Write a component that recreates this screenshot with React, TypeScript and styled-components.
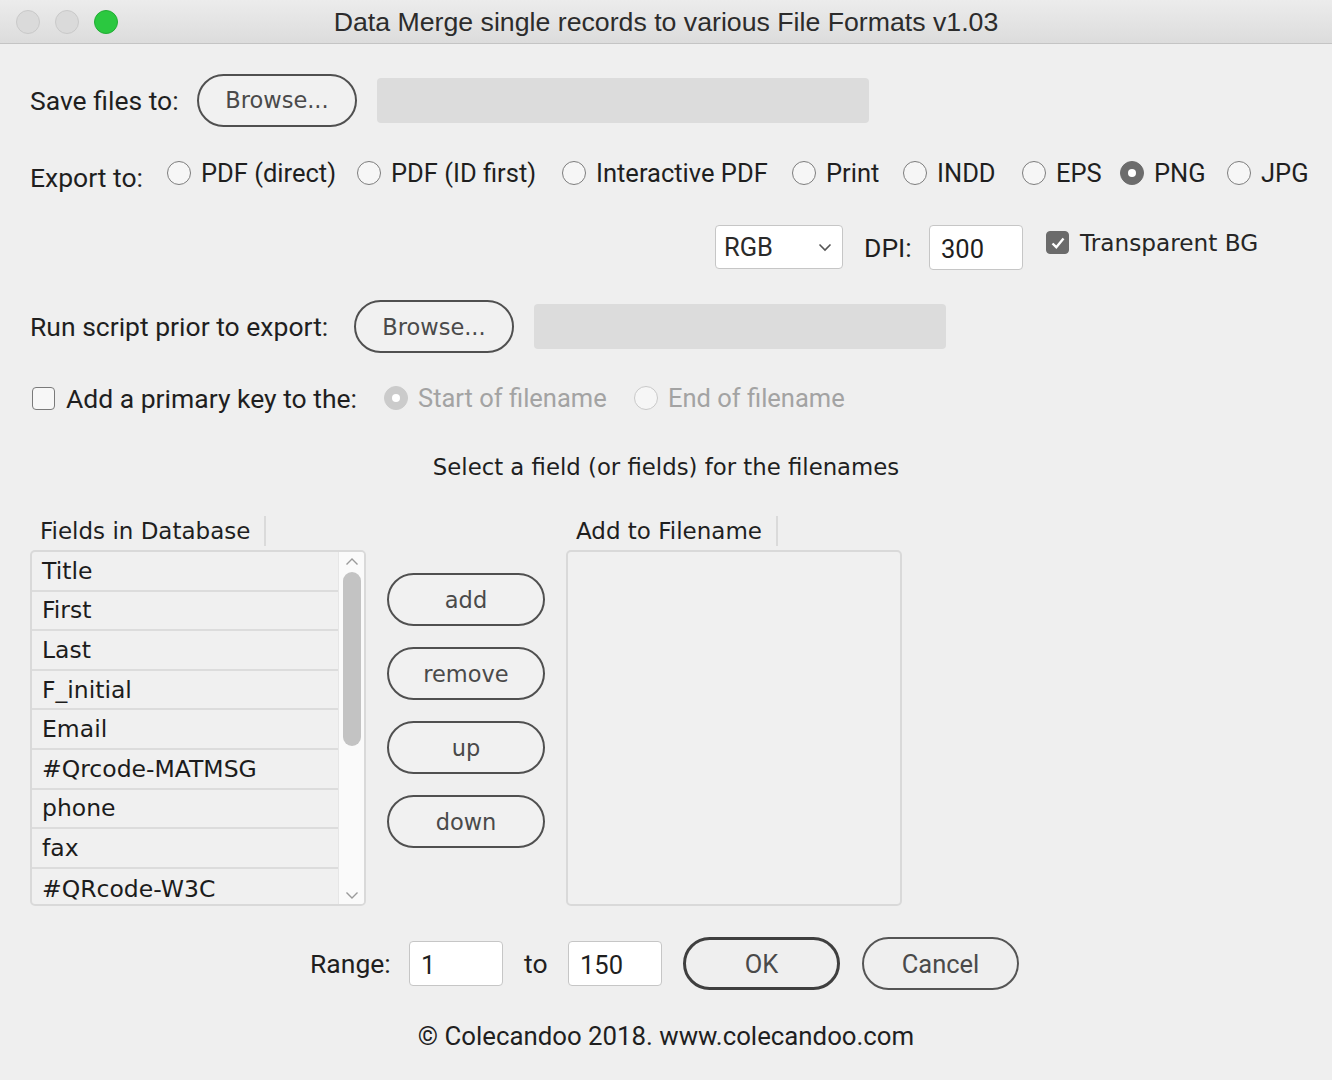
import React from "react";
import styled, { createGlobalStyle } from "styled-components";

const LUCIDA = `"DejaVu Sans", "Open Sans", sans-serif`;
const MYRIAD = `Roboto, "Liberation Sans", sans-serif`;

const GlobalStyle = createGlobalStyle`
  html, body {
    margin: 0;
    padding: 0;
    background: #efefef;
  }
  body {
    font-family: ${LUCIDA};
    color: #1f1f1f;
  }
`;

const exportFormats = [
  { label: "PDF (direct)", w: 190 },
  { label: "PDF (ID first)", w: 205 },
  { label: "Interactive PDF", w: 230 },
  { label: "Print", w: 111 },
  { label: "INDD", w: 119 },
  { label: "EPS", w: 98 },
  { label: "PNG", w: 107, checked: true },
  { label: "JPG", w: 80 },
];

const fields = [
  "Title",
  "First",
  "Last",
  "F_initial",
  "Email",
  "#Qrcode-MATMSG",
  "phone",
  "fax",
  "#QRcode-W3C",
];

const Chevron = ({ up }: { up?: boolean }) => (
  <svg width="14" height="9" viewBox="0 0 14 9">
    <path
      d={up ? "M1.5 7.5 L7 2 L12.5 7.5" : "M1.5 1.5 L7 7 L12.5 1.5"}
      fill="none"
      stroke="#9a9a9a"
      strokeWidth="1.4"
    />
  </svg>
);

const App: React.FC = () => {
  return (
    <Window>
      <GlobalStyle />
      <TitleBar>
        <Lights>
          <Light />
          <Light />
          <Light $green />
        </Lights>
        <Title>Data Merge single records to various File Formats v1.03</Title>
        <span />
      </TitleBar>

      <Body>
        <Row $mt={30} $h={52}>
          <Label $w={167}>Save files to:</Label>
          <PillButton $w={160}>Browse...</PillButton>
          <PathField $ml={20} $w={492} />
        </Row>

        <Row $mt={32} $h={30}>
          <Label $w={137} $shift={4}>
            Export to:
          </Label>
          {exportFormats.map((f) => (
            <Option key={f.label} $w={f.w}>
              <Radio $checked={f.checked} />
              <OptionText>{f.label}</OptionText>
            </Option>
          ))}
        </Row>

        <Row $mt={37} $h={44} $indent={685}>
          <Select>
            <span>RGB</span>
            <svg width="14" height="9" viewBox="0 0 14 9">
              <path d="M1.5 1.5 L7 7 L12.5 1.5" fill="none" stroke="#555" strokeWidth="1.6" />
            </svg>
          </Select>
          <Label $w={65} $ml={21}>
            DPI:
          </Label>
          <TextBox $w={94}>300</TextBox>
          <CheckBox $checked $ml={23}>
            <svg width="16" height="14" viewBox="0 0 16 14">
              <path d="M2.5 7.5 L6.3 11.2 L13.5 2.5" fill="none" stroke="#fff" strokeWidth="2.4" />
            </svg>
          </CheckBox>
          <CheckText>Transparent BG</CheckText>
        </Row>

        <Row $mt={31} $h={53}>
          <Label $w={324}>Run script prior to export:</Label>
          <PillButton $w={160}>Browse...</PillButton>
          <PathField $ml={20} $w={412} />
        </Row>

        <Row $mt={32} $h={26}>
          <CheckBox $ml={2} />
          <Label $w={318} $ml={11}>
            Add a primary key to the:
          </Label>
          <Option $w={250}>
            <Radio $checked $disabled />
            <OptionText $disabled>Start of filename</OptionText>
          </Option>
          <Option $w={220}>
            <Radio $disabled />
            <OptionText $disabled>End of filename</OptionText>
          </Option>
        </Row>

        <Heading>Select a field (or fields) for the filenames</Heading>

        <Columns>
          <Column>
            <ColumnHeader>
              <span>Fields in Database</span>
            </ColumnHeader>
            <ListBox>
              <ListRows>
                {fields.map((f) => (
                  <ListRow key={f}>{f}</ListRow>
                ))}
              </ListRows>
              <ScrollTrack>
                <Chevron up />
                <ScrollThumb />
                <Chevron />
              </ScrollTrack>
            </ListBox>
          </Column>

          <ButtonStack>
            <PillButton $w={158}>add</PillButton>
            <PillButton $w={158}>remove</PillButton>
            <PillButton $w={158}>up</PillButton>
            <PillButton $w={158}>down</PillButton>
          </ButtonStack>

          <Column>
            <ColumnHeader>
              <span>Add to Filename</span>
            </ColumnHeader>
            <ListBox />
          </Column>
        </Columns>

        <Row $mt={31} $h={53} $center>
          <Label $w={99}>Range:</Label>
          <TextBox $w={94}>1</TextBox>
          <Label $w={44} $ml={21}>
            to
          </Label>
          <TextBox $w={94}>150</TextBox>
          <DialogButton $ml={21} $default>
            OK
          </DialogButton>
          <DialogButton $ml={22}>Cancel</DialogButton>
        </Row>

        <Footer>© Colecandoo 2018. www.colecandoo.com</Footer>
      </Body>
    </Window>
  );
};

export default App;

const Window = styled.div`
  width: 1332px;
  height: 1080px;
  overflow: hidden;
  background: #efefef;
  display: flex;
  flex-direction: column;
`;

const TitleBar = styled.div`
  height: 43px;
  flex-shrink: 0;
  display: grid;
  grid-template-columns: 1fr auto 1fr;
  align-items: center;
  background: linear-gradient(to bottom, #ececec, #dcdcdc);
  border-bottom: 1px solid #c4c4c4;
`;

const Lights = styled.div`
  display: flex;
  gap: 15px;
  padding-left: 16px;
`;

const Light = styled.span<{ $green?: boolean }>`
  width: 24px;
  height: 24px;
  border-radius: 50%;
  box-sizing: border-box;
  background: ${({ $green }) => ($green ? "#2bc840" : "#dadada")};
  border: 1px solid ${({ $green }) => ($green ? "#22ad35" : "#c9c9c9")};
`;

const Title = styled.div`
  font-family: "Liberation Sans", Arial, sans-serif;
  font-size: 26.7px;
  color: #2c2c2c;
  padding-top: 1px;
`;

const Body = styled.div`
  padding: 0 30px;
  display: flex;
  flex-direction: column;
`;

const Row = styled.div<{ $mt: number; $h: number; $indent?: number; $center?: boolean }>`
  display: flex;
  align-items: center;
  justify-content: ${({ $center }) => ($center ? "center" : "flex-start")};
  margin-top: ${({ $mt }) => $mt}px;
  height: ${({ $h }) => $h}px;
  padding-left: ${({ $indent }) => $indent || 0}px;
  padding-right: ${({ $center }) => ($center ? "3px" : "0")};
`;

const Label = styled.span<{ $w?: number; $ml?: number; $shift?: number }>`
  font-family: ${MYRIAD};
  font-size: 26.5px;
  color: #1f1f1f;
  white-space: nowrap;
  flex-shrink: 0;
  width: ${({ $w }) => ($w ? `${$w}px` : "auto")};
  margin-left: ${({ $ml }) => $ml || 0}px;
  position: relative;
  top: ${({ $shift }) => $shift || 0}px;
`;

const PillButton = styled.div<{ $w: number }>`
  box-sizing: border-box;
  width: ${({ $w }) => $w}px;
  height: 53px;
  flex-shrink: 0;
  border: 2px solid #505050;
  border-radius: 27px;
  background: #f1f1f1;
  display: flex;
  align-items: center;
  justify-content: center;
  font-family: ${LUCIDA};
  font-size: 22.5px;
  color: #4a4a4a;
`;

const PathField = styled.div<{ $ml: number; $w: number }>`
  margin-left: ${({ $ml }) => $ml}px;
  width: ${({ $w }) => $w}px;
  height: 45px;
  border-radius: 4px;
  background: #dcdcdc;
`;

const Option = styled.label<{ $w: number }>`
  display: flex;
  align-items: center;
  gap: 10px;
  width: ${({ $w }) => $w}px;
  flex-shrink: 0;
  white-space: nowrap;
`;

const Radio = styled.span<{ $checked?: boolean; $disabled?: boolean }>`
  box-sizing: border-box;
  width: 24px;
  height: 24px;
  border-radius: 50%;
  flex-shrink: 0;
  position: relative;
  background: ${({ $checked, $disabled }) =>
    $checked ? ($disabled ? "#cbcbcb" : "#6c6c6c") : "#f6f6f6"};
  border: 1.5px solid
    ${({ $checked, $disabled }) =>
      $checked ? ($disabled ? "#cbcbcb" : "#6c6c6c") : $disabled ? "#c9c9c9" : "#7d7d7d"};

  &::after {
    content: "";
    display: ${({ $checked }) => ($checked ? "block" : "none")};
    position: absolute;
    left: 50%;
    top: 50%;
    width: 8px;
    height: 8px;
    margin: -4px 0 0 -4px;
    border-radius: 50%;
    background: #fff;
  }
`;

const OptionText = styled.span<{ $disabled?: boolean }>`
  font-family: ${MYRIAD};
  font-size: 25.5px;
  color: ${({ $disabled }) => ($disabled ? "#a3a3a3" : "#1f1f1f")};
`;

const Select = styled.div`
  box-sizing: border-box;
  width: 128px;
  height: 44px;
  flex-shrink: 0;
  background: #fff;
  border: 1.5px solid #c6c6c6;
  border-radius: 4px;
  display: flex;
  align-items: center;
  justify-content: space-between;
  padding: 0 10px 0 8px;
  font-family: ${MYRIAD};
  font-size: 25.5px;
  color: #2a2a2a;
`;

const TextBox = styled.div<{ $w: number }>`
  box-sizing: border-box;
  width: ${({ $w }) => $w}px;
  height: 45px;
  flex-shrink: 0;
  background: #fff;
  border: 1.5px solid #c6c6c6;
  border-radius: 4px;
  display: flex;
  align-items: center;
  padding: 3px 0 0 11px;
  font-family: ${MYRIAD};
  font-size: 25.5px;
  color: #1f1f1f;
`;

const CheckBox = styled.span<{ $checked?: boolean; $ml?: number }>`
  box-sizing: border-box;
  width: 23px;
  height: 23px;
  flex-shrink: 0;
  margin-left: ${({ $ml }) => $ml || 0}px;
  border-radius: 4px;
  display: flex;
  align-items: center;
  justify-content: center;
  align-self: ${({ $checked }) => ($checked ? "flex-start" : "center")};
  margin-top: ${({ $checked }) => ($checked ? "6px" : "0")};
  background: ${({ $checked }) => ($checked ? "#6b6b6b" : "#f7f7f7")};
  border: 1.5px solid ${({ $checked }) => ($checked ? "#6b6b6b" : "#7a7a7a")};
`;

const CheckText = styled.span`
  font-family: ${LUCIDA};
  font-size: 23.2px;
  color: #262626;
  margin-left: 11px;
  align-self: flex-start;
  margin-top: 4px;
  white-space: nowrap;
`;

const Heading = styled.div`
  margin-top: 41px;
  height: 30px;
  line-height: 30px;
  text-align: center;
  font-family: ${LUCIDA};
  font-size: 22.8px;
  color: #1f1f1f;
`;

const Columns = styled.div`
  display: flex;
  align-items: flex-start;
  gap: 21px;
  margin-top: 34px;
`;

const Column = styled.div`
  width: 336px;
  display: flex;
  flex-direction: column;
  gap: 4px;
`;

const ColumnHeader = styled.div`
  height: 30px;
  display: flex;
  align-items: center;
  padding-left: 10px;

  span {
    font-family: ${LUCIDA};
    font-size: 23px;
    color: #1f1f1f;
    padding-right: 14px;
    border-right: 2px solid #dadada;
    line-height: 30px;
  }
`;

const ListBox = styled.div`
  box-sizing: border-box;
  height: 356px;
  border: 2px solid #d9d9d9;
  border-radius: 5px;
  background: #f0f0f0;
  display: flex;
  overflow: hidden;
`;

const ListRows = styled.div`
  flex: 1;
  display: flex;
  flex-direction: column;
`;

const ListRow = styled.div`
  box-sizing: border-box;
  height: 39.6px;
  flex-shrink: 0;
  display: flex;
  align-items: center;
  padding-left: 10px;
  border-bottom: 2px solid #dcdcdc;
  font-family: ${LUCIDA};
  font-size: 23.5px;
  color: #1c1c1c;

  &:last-child {
    border-bottom: none;
  }
`;

const ScrollTrack = styled.div`
  width: 25px;
  flex-shrink: 0;
  background: #fafafa;
  border-left: 1px solid #e6e6e6;
  display: flex;
  flex-direction: column;
  align-items: center;
  padding: 5px 0 4px;
  gap: 6px;
`;

const ScrollThumb = styled.div`
  width: 18px;
  height: 174px;
  border-radius: 9px;
  background: #c3c3c3;
  margin-bottom: auto;
`;

const ButtonStack = styled.div`
  display: flex;
  flex-direction: column;
  gap: 21px;
  padding-top: 57px;
`;

const DialogButton = styled.div<{ $ml: number; $default?: boolean }>`
  box-sizing: border-box;
  width: 157px;
  height: 53px;
  flex-shrink: 0;
  margin-left: ${({ $ml }) => $ml}px;
  border: ${({ $default }) => ($default ? "3.5px solid #3f3f3f" : "2px solid #555")};
  border-radius: 27px;
  display: flex;
  align-items: center;
  justify-content: center;
  font-family: ${MYRIAD};
  font-size: 25.5px;
  color: #4a4a4a;
`;

const Footer = styled.div`
  margin-top: 31px;
  height: 30px;
  line-height: 30px;
  text-align: center;
  font-family: ${MYRIAD};
  font-size: 25.8px;
  color: #1f1f1f;
`;
